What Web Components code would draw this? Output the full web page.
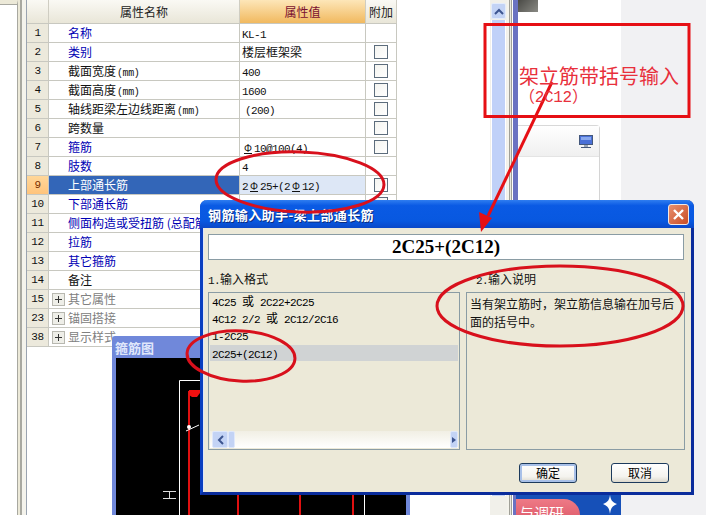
<!DOCTYPE html>
<html>
<head>
<meta charset="utf-8">
<title>钢筋输入助手</title>
<style>
	html, body { margin: 0; padding: 0; }
	body { width: 706px; height: 515px; overflow: hidden; font: 12px "Noto Sans CJK SC", sans-serif; }
</style>
</head>
<body>
<app-shell>
	<prop-table slot="table">
		<prop-row num="1" kind="blue" name="名称" noadd><m-t>KL-1</m-t></prop-row>
		<prop-row num="2" kind="blue" name="类别">楼层框架梁</prop-row>
		<prop-row num="3" name="截面宽度" unit="(mm)"><m-t>400</m-t></prop-row>
		<prop-row num="4" name="截面高度" unit="(mm)"><m-t>1600</m-t></prop-row>
		<prop-row num="5" name="轴线距梁左边线距离" unit="(mm)"><m-t indent>(200)</m-t></prop-row>
		<prop-row num="6" name="跨数量"></prop-row>
		<prop-row num="7" kind="blue" name="箍筋"><m-t><rb-sym></rb-sym>10@100(4)</m-t></prop-row>
		<prop-row num="8" kind="blue" name="肢数" noadd><m-t>4</m-t></prop-row>
		<prop-row num="9" kind="blue" name="上部通长筋" selected><m-t>2<rb-sym></rb-sym>25+(2<rb-sym></rb-sym>12)</m-t></prop-row>
		<prop-row num="10" kind="blue" name="下部通长筋"></prop-row>
		<prop-row num="11" kind="blue" name="侧面构造或受扭筋 (总配筋"></prop-row>
		<prop-row num="12" kind="blue" name="拉筋"></prop-row>
		<prop-row num="13" kind="blue" name="其它箍筋"></prop-row>
		<prop-row num="14" name="备注" noadd></prop-row>
		<prop-row num="15" kind="group" name="其它属性" noadd></prop-row>
		<prop-row num="23" kind="group" name="锚固搭接" noadd></prop-row>
		<prop-row num="38" kind="group" name="显示样式" noadd></prop-row>
	</prop-table>
	<rebar-window slot="windows"></rebar-window>
	<helper-dialog slot="windows"></helper-dialog>
	<red-notes slot="windows"></red-notes>
</app-shell>

<script>
class MonoText extends HTMLElement {
	constructor() {
		super();
		this.attachShadow({ mode: 'open' }).innerHTML = `
<style>
	:host { display: inline; font-family: "Liberation Mono", monospace; font-size: 11px; letter-spacing: -0.6px; }
	:host([indent]) { margin-left: 3px; }
</style><slot></slot>`;
	}
}
customElements.define('m-t', MonoText);

// rebar grade symbol, a phi with a foot
class RebarSym extends HTMLElement {
	constructor() {
		super();
		this.attachShadow({ mode: 'open' }).innerHTML = `
<style>
	:host { display: inline-block; width: 12px; text-align: center; font-family: "Liberation Sans", sans-serif; font-size: 10px; letter-spacing: 0; }
	span { text-decoration: underline; text-underline-offset: 1px; }
</style><span>Φ</span>`;
	}
}
customElements.define('rb-sym', RebarSym);

class AppShell extends HTMLElement {
	constructor() {
		super();
		this.attachShadow({ mode: 'open' }).innerHTML = `
<style>
	:host { display: flex; position: relative; width: 706px; height: 515px; overflow: hidden; background: #fff; }
	.side { width: 17px; flex: none; background: #fff; border-top: 4px solid #ece9d8; box-shadow: inset 0 1px 0 #a8a8a0; border-right: 1px solid #a8a8a0; box-sizing: content-box; height: 511px; }
	.gutter { width: 9px; flex: none; background: linear-gradient(90deg, #ece9d8 0 2px, #a8a8a0 2px 4px, #f4f3ec 4px 8px, #9aa3b0 8px 9px); }
	.main { width: 464px; flex: none; background: #fff; }
	.scroll { width: 15px; flex: none; display: flex; flex-direction: column; background: #f1f0ea; margin-left: -1px; padding: 0 1px; }
	.scroll .btn { height: 14px; margin-top: 3px; background: #c3d3f5; border: 1px solid #e4ecfb; border-radius: 2px; display: flex; align-items: center; justify-content: center; }
	.scroll .track { height: 476px; margin-top: 1px; background: #c0d1f8; border-left: 1px solid #fff; border-right: 1px solid #fff; }
	.splitter { width: 6px; flex: none; background: linear-gradient(90deg, #f4f3ec 0 2px, #a0a098 2px 3px, #e8e8e0 3px 4px, #a0a098 4px 5px, #fff 5px 6px); }
	.edge { width: 5px; flex: none; background: #6a72c2; }
	.right { width: 103px; flex: none; display: flex; flex-direction: column; background: #fff; }
	.photo { width: 20px; height: 12px; background: linear-gradient(135deg, #4a4a46, #8a8a84); }
	.card { margin-top: 113px; width: 82px; height: 75px; box-sizing: border-box; border-right: 1px solid #d4d4d4; border-top: 1px solid #d8d8d8; border-top-right-radius: 4px; }
	.card .head { height: 30px; display: flex; justify-content: flex-end; align-items: center; padding-right: 6px; background: linear-gradient(#fff, #f0f0f0); border-bottom: 1px solid #e4e4e4; }
	.promo { margin-top: auto; height: 20px; background: #1650b8; position: relative; overflow: hidden; margin-left: -2px; }
	.promo .pill { position: absolute; left: 0; top: 4px; width: 64px; height: 30px; background: linear-gradient(#ee7a86, #d85060); border-radius: 0 16px 0 0; color: #fff; font-size: 15px; line-height: 28px; padding-left: 3px; box-sizing: border-box; white-space: nowrap; }
	.promo svg { position: absolute; left: 85px; top: 0; }
	.rest { flex: 1; background: #f1f1f3; }
</style>
<div class="side"></div>
<div class="gutter"></div>
<div class="main"><slot name="table"></slot></div>
<div class="scroll">
	<div class="btn"><svg width="10" height="7" viewBox="0 0 10 7"><path d="M1 6l4-4 4 4" fill="none" stroke="#3d5590" stroke-width="2"/></svg></div>
	<div class="track"></div>
</div>
<div class="splitter"></div>
<div class="edge"></div>
<div class="right">
	<div class="photo"></div>
	<div class="card"><div class="head">
		<svg width="14" height="13" viewBox="0 0 14 13"><rect x=".5" y=".5" width="13" height="9" fill="#4a70d8" stroke="#44587c"/><rect x="2" y="2" width="10" height="3" fill="#88a8ee"/><path d="M5 11h4M2 12.500h10" stroke="#44587c"/></svg>
	</div></div>
	<div class="promo">
		<div class="pill">与调研</div>
		<svg width="18" height="20" viewBox="0 0 18 20"><path d="M9 0c.8 5 2 7 7 9-5 2-6.200 4-7 10-.8-6-2-8-7-10 5-2 6.200-4 7-9z" fill="#fff"/></svg>
	</div>
</div>
<div class="rest"></div>
<slot name="windows"></slot>`;
	}
}
customElements.define('app-shell', AppShell);

class PropTable extends HTMLElement {
	constructor() {
		super();
		this.attachShadow({ mode: 'open' }).innerHTML = `
<style>
	:host { display: block; width: 370px; color: #000; }
	.head { display: grid; grid-template-columns: 22px 191px 126px 31px; height: 24px; box-sizing: border-box; border-bottom: 1px solid #c8c8c0; font-size: 12px; line-height: 23px; text-align: center; }
	.head div { background: linear-gradient(#faf9f4, #e9e6d8); border-right: 1px solid #cfcdc2; color: #222; }
	.head .val { background: linear-gradient(#fde6b8, #f1b95f); color: #7a1030; }
</style>
<div class="head"><div></div><div>属性名称</div><div class="val">属性值</div><div>附加</div></div>
<slot></slot>`;
	}
}
customElements.define('prop-table', PropTable);

const propRowTemplate = document.createElement('template');
propRowTemplate.innerHTML = `
<style>
	:host { display: grid; grid-template-columns: 22px 191px 126px 31px; height: 19px; box-sizing: border-box; border-bottom: 1px solid #c8c8c0; font-size: 12px; line-height: 18px; color: #111; }
	.num { background: #ece9dc; border-right: 1px solid #c8c8c0; text-align: center; font-family: "Liberation Mono", monospace; font-size: 11px; letter-spacing: -0.4px; }
	.name { border-right: 1px solid #c8c8c0; padding-left: 19px; white-space: nowrap; overflow: hidden; box-sizing: border-box; position: relative; }
	.name i { font-style: normal; font-family: "Liberation Mono", monospace; font-size: 10px; letter-spacing: -0.4px; margin-left: 1px; }
	.val { border-right: 1px solid #c8c8c0; padding-left: 2px; white-space: nowrap; overflow: hidden; }
	.add { border-right: 1px solid #c8c8c0; display: flex; align-items: center; justify-content: center; }
	.add b { display: block; width: 12px; height: 12px; border: 1px solid #5c6c7c; background: linear-gradient(135deg, #f4f4f0, #fff); }
	.plus { display: inline-block; width: 11px; height: 11px; border: 1px solid #b8b8b0; background: #eeeee8; position: absolute; left: 3px; top: 3px; }
	.plus::before { content: ""; position: absolute; left: 2px; top: 5px; width: 7px; height: 1px; background: #333; }
	.plus::after { content: ""; position: absolute; left: 5px; top: 2px; width: 1px; height: 7px; background: #333; }
	:host([kind="blue"]) .name { color: #0000b4; }
	:host([kind="group"]) .name { color: #808080; }
	:host([selected]) .num { background: linear-gradient(#ffd79a, #ffc47c); color: #7a3000; }
	:host([selected]) .name { background: #3366b8; color: #fff; }
	:host([selected]) .val { background: #dde7f6; }
</style>
<div class="num"></div>
<div class="name"></div>
<div class="val"><slot></slot></div>
<div class="add"></div>`;

class PropRow extends HTMLElement {
	constructor() {
		super();
		this.attachShadow({ mode: 'open' }).appendChild(propRowTemplate.content.cloneNode(true));
	}

	connectedCallback() {
		const root = this.shadowRoot;
		root.querySelector('.num').textContent = this.getAttribute('num');
		const name = root.querySelector('.name');
		name.textContent = this.getAttribute('name');
		if (this.getAttribute('unit')) {
			const unit = document.createElement('i');
			unit.textContent = this.getAttribute('unit');
			name.appendChild(unit);
		}
		if (this.getAttribute('kind') === 'group') {
			const plus = document.createElement('span');
			plus.className = 'plus';
			name.appendChild(plus);
		}
		if (!this.hasAttribute('noadd')) {
			root.querySelector('.add').appendChild(document.createElement('b'));
		}
	}
}
customElements.define('prop-row', PropRow);

class RebarWindow extends HTMLElement {
	constructor() {
		super();
		this.attachShadow({ mode: 'open' }).innerHTML = `
<style>
	:host { display: flex; flex-direction: column; position: absolute; left: 112px; top: 336px; width: 298px; height: 179px; background: #7088da; box-sizing: border-box; padding: 0 4px; border-radius: 3px 3px 0 0; }
	.title { height: 22px; flex: none; line-height: 24px; margin-left: -1px; font-weight: 700; font-size: 13px; color: #dfe6fa; }
	.cad { flex: 1; background: #000; display: block; }
</style>
<div class="title">箍筋图</div>
<svg class="cad" width="290" height="157" viewBox="116 358 290 157">
	<path d="M364.500 515V380.500H179.500V515" fill="none" stroke="#fff"/>
	<path d="M189 515V391M238 515V480M300 515V480M353 515V480" fill="none" stroke="#e01010" stroke-width="2"/>
	<path d="M189 390h11v3l-3 4h-5l-3-2z" fill="#f01010"/>
	<path d="M186 431l13-6" stroke="#fff" fill="none"/>
	<circle cx="189" cy="427" r="2" fill="#fff"/>
	<path d="M163 491.500h13M163 498.500h13M169.500 491v8" stroke="#ddd" fill="none"/>
</svg>`;
	}
}
customElements.define('rebar-window', RebarWindow);

const helperDialogTemplate = document.createElement('template');
helperDialogTemplate.innerHTML = `
<style>
	:host { display: flex; flex-direction: column; position: absolute; left: 200px; top: 200px; width: 494px; height: 295px; box-sizing: border-box; background: #ece9d8; border: 3px solid #0a3fc0; border-top: 0; border-bottom-color: #0a2c9c; border-right-color: #0a2c9c; border-radius: 7px 7px 0 0; box-shadow: inset 1px 0 0 #e0e6f8; }
	.bar { height: 28px; flex: none; margin: 0 -3px; padding: 0 5px 0 8px; display: flex; align-items: center; justify-content: space-between; background: linear-gradient(#2f7df0, #0a5ae4 20%, #0858e0 75%, #0a48c8); border-radius: 7px 7px 0 0; color: #fff; font-weight: 700; font-size: 13px; letter-spacing: .4px; text-shadow: 1px 1px 0 #0a2c80; }
	.bar .close { width: 21px; height: 21px; box-sizing: border-box; border: 1px solid #f0e8e4; border-radius: 3px; background: linear-gradient(135deg, #e89070, #c84c24); display: flex; align-items: center; justify-content: center; }
	.body { flex: 1; display: flex; flex-direction: column; padding: 6px 7px 0 5px; }
	.formula { height: 26px; flex: none; box-sizing: border-box; background: #fff; border: 1px solid #8a9ca4; text-align: center; font: 700 19px/24px "Liberation Serif", serif; color: #000; }
	.cols { display: grid; grid-template-columns: 252px 219px; column-gap: 6px; margin-top: 11px; }
	.cols h4 { margin: 0; height: 21px; font-weight: 400; font-size: 12px; line-height: 15px; color: #111; }
	.cols h4.two { padding-left: 10px; }
	.box { height: 158px; box-sizing: border-box; border: 1px solid #8a9ca4; position: relative; }
	.list { padding: 1px 1px 0; font-size: 12px; }
	.list div { height: 17px; line-height: 13px; padding-left: 2px; white-space: nowrap; }
	.list div.on { background: #d0d3d4; height: 16px; line-height: 15px; }
	.hbar { position: absolute; left: 1px; right: 1px; bottom: 1px; height: 17px; display: flex; justify-content: space-between; background: linear-gradient(#f1efe4, #fff); }
	.hbar span { display: flex; align-items: center; justify-content: center; height: 17px; background: #c3d3f5; border: 1px solid #dfe8fb; box-sizing: border-box; border-radius: 2px; }
	.hbar .l { width: 16px; }
	.hbar .t { width: 7px; position: absolute; left: 18px; }
	.hbar .r { width: 8px; }
	.note { padding: 2px 3px; font-size: 12px; line-height: 18px; color: #111; }
	.foot { display: flex; justify-content: flex-end; gap: 34px; padding: 13px 15px 0 0; }
</style>
<div class="bar"><span>钢筋输入助手-梁上部通长筋</span>
	<span class="close"><svg width="13" height="13" viewBox="0 0 13 13"><path d="M2 2l9 9M11 2l-9 9" stroke="#fff" stroke-width="2.400"/></svg></span>
</div>
<div class="body">
	<div class="formula">2C25+(2C12)</div>
	<div class="cols">
		<div>
			<h4><m-t>1.</m-t>输入格式</h4>
			<div class="box list">
				<div><m-t>4C25 </m-t>或<m-t> 2C22+2C25</m-t></div>
				<div><m-t>4C12 2/2 </m-t>或<m-t> 2C12/2C16</m-t></div>
				<div><m-t>1-2C25</m-t></div>
				<div class="on"><m-t>2C25+(2C12)</m-t></div>
				<div class="hbar">
					<span class="l"><svg width="7" height="10" viewBox="0 0 7 10"><path d="M6 1L2 5l4 4" fill="none" stroke="#3d5590" stroke-width="2"/></svg></span>
					<span class="t"></span>
					<span class="r"><svg width="4" height="6" viewBox="0 0 4 6"><path d="M0 0l4 3-4 3z" fill="#3d5590"/></svg></span>
				</div>
			</div>
		</div>
		<div>
			<h4 class="two"><m-t>2.</m-t>输入说明</h4>
			<div class="box note">当有架立筋时，架立筋信息输在加号后面的括号中。</div>
		</div>
	</div>
	<div class="foot">
		<dlg-button default>确定</dlg-button>
		<dlg-button>取消</dlg-button>
	</div>
</div>`;

class HelperDialog extends HTMLElement {
	constructor() {
		super();
		this.attachShadow({ mode: 'open' }).appendChild(helperDialogTemplate.content.cloneNode(true));
	}
}
customElements.define('helper-dialog', HelperDialog);

class DlgButton extends HTMLElement {
	constructor() {
		super();
		this.attachShadow({ mode: 'open' }).innerHTML = `
<style>
	:host { display: block; width: 58px; height: 20px; box-sizing: border-box; border: 1px solid #1c3a5c; border-radius: 3px; background: linear-gradient(#fff, #f4f3ee 70%, #dcd8cc); text-align: center; font-size: 12px; line-height: 18px; color: #000; }
	:host([default]) { box-shadow: inset 0 0 0 2px #a8c0e8; }
</style><slot></slot>`;
	}
}
customElements.define('dlg-button', DlgButton);

// hand drawn markup that sits on top of the whole screenshot
class RedNotes extends HTMLElement {
	constructor() {
		super();
		this.attachShadow({ mode: 'open' }).innerHTML = `
<style>
	:host { display: block; position: absolute; left: 0; top: 0; width: 706px; height: 515px; pointer-events: none; }
	svg { position: absolute; left: 0; top: 0; }
	.note { position: absolute; left: 519px; top: 64px; width: 170px; color: #e8303c; font-size: 20px; line-height: 24px; white-space: nowrap; }
	.note span { display: block; font-family: "Liberation Mono", "Noto Sans CJK SC", monospace; font-size: 16px; line-height: 20px; padding-left: 0; letter-spacing: -.3px; }
</style>
<svg width="706" height="515" viewBox="0 0 706 515">
	<rect x="485" y="24.500" width="204" height="92" fill="none" stroke="#e60f14" stroke-width="3"/>
	<ellipse cx="300" cy="182" rx="84" ry="30" fill="none" stroke="#d8101c" stroke-width="3" transform="rotate(2 300 182)"/>
	<ellipse cx="241" cy="356" rx="54" ry="25" fill="none" stroke="#d8101c" stroke-width="3" transform="rotate(3 241 356)"/>
	<ellipse cx="560" cy="306" rx="123" ry="40" fill="none" stroke="#d8101c" stroke-width="3"/>
	<path d="M552 82L488 216" stroke="#e60f14" stroke-width="3" fill="none"/>
	<path d="M481 232l-2-20 13 6z" fill="#e60f14"/>
</svg>
<div class="note">架立筋带括号输入<span>（2C12）</span></div>`;
	}
}
customElements.define('red-notes', RedNotes);
</script>
</body>
</html>
